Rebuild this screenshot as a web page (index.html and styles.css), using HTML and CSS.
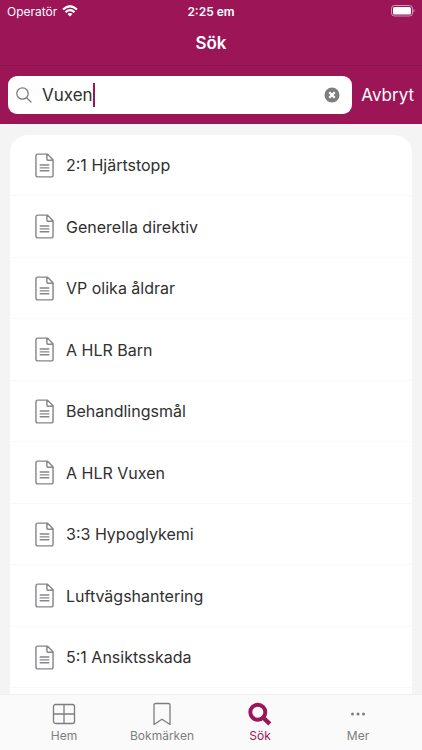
FILE: index.html
```
<!DOCTYPE html>
<html lang="sv">
<head>
<meta charset="utf-8">
<meta name="viewport" content="width=device-width, initial-scale=1">
<title>Sök</title>
<link rel="stylesheet" href="styles.css">
</head>
<body>
<svg class="defs" aria-hidden="true">
  <symbol id="doc" viewBox="0 0 20 26">
    <path d="M3 1H13L19 7V23Q19 25 17 25H3Q1 25 1 23V3Q1 1 3 1ZM12.500 1V5.500Q12.500 7.500 14.500 7.500H19M5.500 12.500H14.500M5.500 15.500H14.500M5.500 18.500H14.500" fill="none" stroke="currentColor" stroke-width="1.500" stroke-linejoin="round" stroke-linecap="round"/>
  </symbol>
</svg>
<header class="header">
  <div class="status">
    <div class="carrier">
      <span>Operatör</span>
      <svg width="16" height="12" viewBox="0 0 16 12" fill="none" stroke="#fff" stroke-width="2.200" aria-hidden="true">
        <path d="M1 4.500Q8 -2 15 4.500"/>
        <path d="M3.500 7.200Q8 3 12.500 7.200"/>
        <path d="M8 11.500L5.500 9Q8 7 10.500 9Z" fill="#fff" stroke="none"/>
      </svg>
    </div>
    <time class="clock">2:25 em</time>
    <svg class="battery" width="26" height="12" viewBox="0 0 26 12" aria-hidden="true">
      <rect x="2.500" y="0.500" width="21" height="10.500" rx="3" fill="none" stroke="#fff" stroke-opacity=".55"/>
      <rect x="4" y="2" width="18" height="7.500" rx="1.600" fill="#fff"/>
      <path d="M24.500 4V7.500Q25.600 7 25.600 5.750T24.500 4Z" fill="#fff" fill-opacity=".6"/>
    </svg>
  </div>
  <h1 class="title">Sök</h1>
  <form class="search" role="search">
    <div class="field">
      <svg class="lens" width="16" height="16" viewBox="0 0 16 16" fill="none" stroke="#7b7b7b" stroke-width="1.300" stroke-linecap="round" aria-hidden="true">
        <circle cx="6.500" cy="6.500" r="5.700"/><path d="M10.700 10.700L15 15"/>
      </svg>
      <input class="query" type="text" value="Vuxen" aria-label="Sök">
      <span class="caret"></span>
      <button class="clear" type="button" aria-label="Rensa">
        <svg width="16" height="16" viewBox="0 0 16 16" aria-hidden="true">
          <circle cx="8" cy="8" r="7.500" fill="#7d7d7d"/>
          <path d="M5.300 5.300L10.700 10.700M10.700 5.300L5.300 10.700" stroke="#fff" stroke-width="2.300"/>
        </svg>
      </button>
    </div>
    <button class="cancel" type="button">Avbryt</button>
  </form>
</header>
<main class="content">
  <ul class="results">
    <li><a href="#"><svg class="doc"><use href="#doc"/></svg>2:1 Hjärtstopp</a></li>
    <li><a href="#"><svg class="doc"><use href="#doc"/></svg>Generella direktiv</a></li>
    <li><a href="#"><svg class="doc"><use href="#doc"/></svg>VP olika åldrar</a></li>
    <li><a href="#"><svg class="doc"><use href="#doc"/></svg>A HLR Barn</a></li>
    <li><a href="#"><svg class="doc"><use href="#doc"/></svg>Behandlingsmål</a></li>
    <li><a href="#"><svg class="doc"><use href="#doc"/></svg>A HLR Vuxen</a></li>
    <li><a href="#"><svg class="doc"><use href="#doc"/></svg>3:3 Hypoglykemi</a></li>
    <li><a href="#"><svg class="doc"><use href="#doc"/></svg>Luftvägshantering</a></li>
    <li><a href="#"><svg class="doc"><use href="#doc"/></svg>5:1 Ansiktsskada</a></li>
  </ul>
</main>
<nav class="tabs">
  <a class="tab" href="#">
    <svg width="24" height="24" viewBox="0 0 24 24" fill="none" stroke="currentColor" stroke-width="1.300" aria-hidden="true"><rect x="1.500" y="2.500" width="21" height="19" rx="2"/><path d="M12 2.500V21.500M1.500 12H22.500"/></svg>
    Hem
  </a>
  <a class="tab" href="#">
    <svg width="24" height="24" viewBox="0 0 24 24" fill="none" stroke="currentColor" stroke-width="1.300" stroke-linejoin="round" aria-hidden="true"><path d="M4 3Q4 1.500 5.500 1.500H18.500Q20 1.500 20 3V22.500L12 17.300L4 22.500Z"/></svg>
    Bokmärken
  </a>
  <a class="tab active" href="#" aria-current="page">
    <svg width="24" height="24" viewBox="0 0 24 24" fill="none" stroke="currentColor" stroke-width="3.900" aria-hidden="true"><circle cx="9.800" cy="10.200" r="7.500"/><path d="M15 15.500L21.800 21.800" stroke-width="4.400"/></svg>
    Sök
  </a>
  <a class="tab" href="#">
    <svg width="24" height="24" viewBox="0 0 24 24" fill="currentColor" aria-hidden="true"><circle cx="6.500" cy="12" r="1.500"/><circle cx="12" cy="12" r="1.500"/><circle cx="17.500" cy="12" r="1.500"/></svg>
    Mer
  </a>
</nav>
</body>
</html>
```
FILE: styles.css
```
* {
  box-sizing: border-box;
}

body {
  margin: 0;
  height: 100vh;
  display: flex;
  flex-direction: column;
  overflow: hidden;
  background: #f4f4f4;
  color: #303030;
  font-family: Inter, "Liberation Sans", sans-serif;
  font-size: 17px;
}

button,
input {
  border: 0;
  padding: 0;
  background: none;
  font: inherit;
  color: inherit;
}

a {
  color: inherit;
  text-decoration: none;
}

.defs {
  position: absolute;
  width: 0;
  height: 0;
}

.header {
  background: #9b1557;
  color: #fff;
}

.status {
  display: grid;
  grid-template-columns: 1fr auto 1fr;
  align-items: center;
  height: 22px;
  padding: 0 7px;
  font-size: 12px;
}

.carrier {
  display: flex;
  align-items: center;
  gap: 5px;
}

.clock {
  font-weight: 600;
}

.battery {
  justify-self: end;
}

.title {
  margin: 0;
  height: 44px;
  border-bottom: 1px solid #8a124d;
  font-size: 17px;
  font-weight: 600;
  line-height: 43px;
  text-align: center;
}

.search {
  display: flex;
  align-items: center;
  gap: 9px;
  height: 58px;
  padding: 0 8px;
}

.field {
  flex: 1;
  min-width: 0;
  display: flex;
  align-items: center;
  height: 38px;
  padding: 0 12px 0 8px;
  border-radius: 9px;
  background: #fff;
  color: #303030;
}

.lens {
  flex: none;
  margin-right: 10px;
}

.query {
  field-sizing: content;
  outline: none;
}

.caret {
  width: 2px;
  height: 24px;
  background: #9b1557;
}

.clear {
  display: flex;
  margin-left: auto;
}

.content {
  flex: 1;
  min-height: 0;
  overflow: hidden;
  padding: 11px 10px 0;
}

.results {
  min-height: 100%;
  margin: 0;
  padding: 0;
  list-style: none;
  border-radius: 18px 18px 0 0;
  background: #fff;
  font-size: 16px;
}

.results li {
  height: 61px;
  border-bottom: 1px solid #f9f9f9;
}

.results li:nth-child(even) {
  height: 62px;
}

.results a {
  display: flex;
  align-items: center;
  gap: 12px;
  height: 100%;
  padding: 0 25px;
}

.doc {
  width: 19px;
  height: 25px;
  color: #86868a;
}

.tabs {
  display: flex;
  height: 56px;
  padding: 0 15px;
  border-top: 1px solid #efefef;
  background: #fafafa;
}

.tab {
  flex: 1;
  display: flex;
  flex-direction: column;
  align-items: center;
  gap: 2px;
  padding-top: 7px;
  color: #7d7d7d;
  font-size: 12px;
  line-height: 16px;
}

.active {
  color: #9b1557;
}
```
